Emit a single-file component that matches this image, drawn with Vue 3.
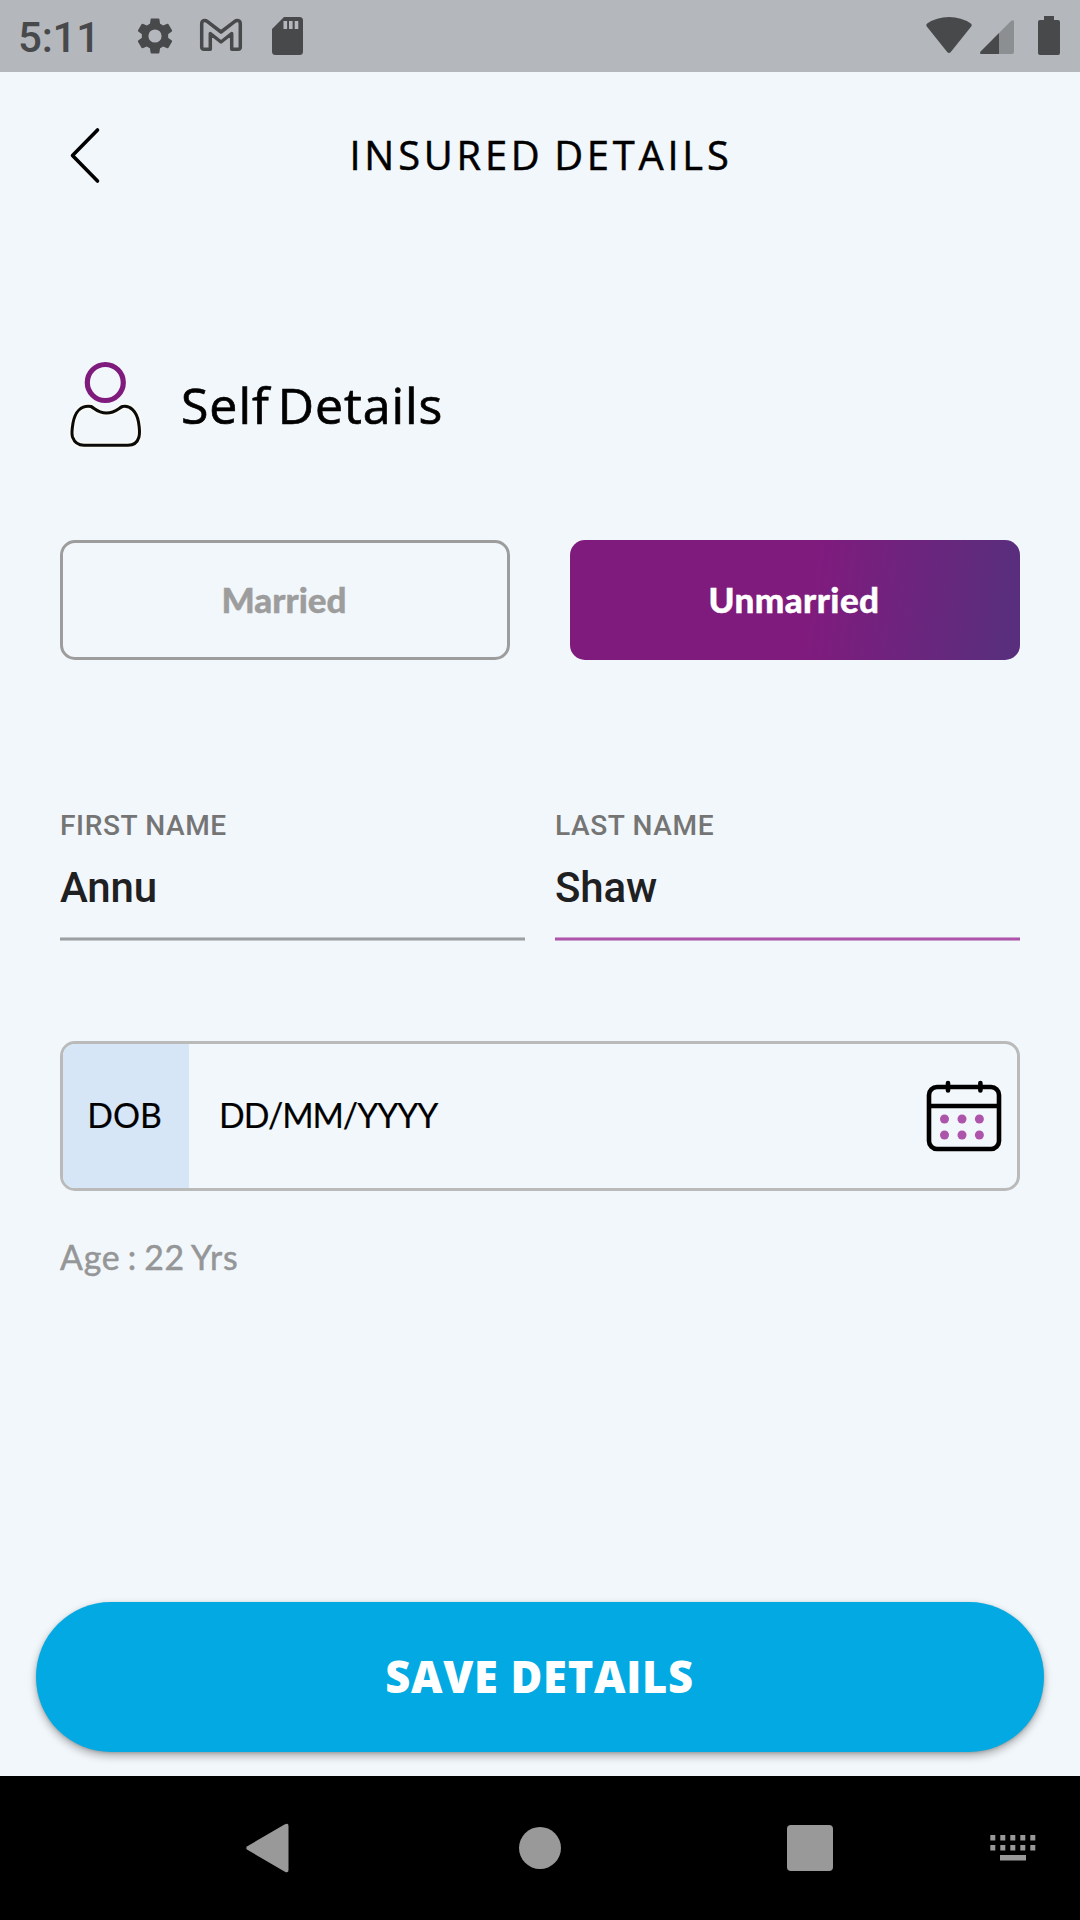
<script setup>
import { ref } from 'vue'

const status = ref('Unmarried')
const options = ['Married', 'Unmarried']
const fields = [
  { label: 'FIRST NAME', value: 'Annu', active: false },
  { label: 'LAST NAME', value: 'Shaw', active: true },
]
const keyColumns = [0, 10, 20, 30, 40]
</script>

<template>
  <div class="screen">
    <div class="statusbar">
      <span class="clock">5:11</span>
      <svg class="gear" width="44" height="44" viewBox="0 0 24 24"><path fill="#48494b" d="M19.14 12.94c.04-.3.06-.61.06-.94s-.02-.64-.07-.94l2.03-1.58a.49.49 0 0 0 .12-.61l-1.92-3.32a.49.49 0 0 0-.59-.22l-2.39.96a7 7 0 0 0-1.62-.94l-.36-2.54A.48.48 0 0 0 13.920 2.400h-3.840a.47.47 0 0 0-.47.41l-.36 2.540c-.59.24-1.130.57-1.620.94l-2.390-.96a.48.48 0 0 0-.59.22L2.740 8.870a.47.47 0 0 0 .12.61l2.030 1.580c-.05.3-.09.63-.09.94s.02.64.07.94l-2.030 1.580a.49.49 0 0 0-.12.61l1.920 3.320c.12.22.37.29.59.22l2.390-.96c.5.38 1.030.7 1.620.94l.36 2.540c.05.24.24.41.48.41h3.840c.24 0 .44-.17.47-.41l.36-2.540a7 7 0 0 0 1.620-.94l2.390.96c.22.08.47 0 .59-.22l1.920-3.320a.47.47 0 0 0-.12-.61zM12 15.600A3.600 3.600 0 1 1 12 8.400a3.600 3.600 0 0 1 0 7.200z" /></svg>
      <svg class="mail" width="42" height="32" viewBox="0 0 42 32"><path d="M1.700 5C1.700 1.500 4.800.500 7.500 2.600L21 13 34.500 2.600C37.200.500 40.300 1.500 40.300 5V28Q40.300 30.300 38 30.300H31.700V14.500L21 23 10.300 14.500V30.300H4Q1.700 30.300 1.700 28Z" fill="none" stroke="#48494b" stroke-width="3.500" stroke-linejoin="round" /></svg>
      <svg class="card" width="31" height="38" viewBox="0 0 31 38"><path d="M12 0H27.500Q31 0 31 3.500V34.500Q31 38 27.500 38H3.500Q0 38 0 34.500V12Z" fill="#48494b" /><path d="M11.500 4h3.600v8h-3.600zM17 4h3.600v8H17zM22.700 4h3.600v8h-3.600z" fill="#b4b7bc" /></svg>
      <span class="grow"></span>
      <svg class="wifi" width="46" height="37" viewBox="0 0 46 37"><path d="M.6 9.200Q-.4 7.600 1.200 6.500Q10.500 0 23 0T44.800 6.500Q46.400 7.600 45.400 9.200L24.800 35Q23 37 21.200 35Z" fill="#48494b" /></svg>
      <svg class="signal" width="34" height="34" viewBox="0 0 34 34"><path d="M19 13 31 .9Q34-.8 34 2V32Q34 34 32 34H19Z" fill="#8b8f92" /><path d="M19 13V34H2Q-1 34 .6 31.400Z" fill="#48494b" /></svg>
      <svg class="battery" width="22" height="39" viewBox="0 0 22 39"><path d="M6 0H16V4H20Q22 4 22 6V37Q22 39 20 39H2Q0 39 0 37V6Q0 4 2 4H6Z" fill="#48494b" /></svg>
    </div>

    <header class="header">
      <svg class="chevron" width="32" height="58" viewBox="0 0 32 58"><path d="M28.500 4 3.500 29.500 28.500 55" fill="none" stroke="#000" stroke-width="3.600" stroke-linecap="round" stroke-linejoin="round" /></svg>
      <h1>INSURED DETAILS</h1>
    </header>

    <main class="content">
      <section class="person">
        <svg width="76" height="90" viewBox="0 0 76 90">
          <circle cx="37.300" cy="22.500" r="18" fill="none" stroke="#801b7e" stroke-width="5.200" />
          <path d="M23 46.500C13 45 7 52 5 63C4 69 3.500 74 4.500 77Q7.500 85.300 16 85.300H60Q68.500 85.300 71 77C72 73 71.500 68 70.500 62C68.500 51 62 45 54.500 46.500C50.500 48 47.500 53 38.500 53S26.500 48 23 46.500Z" fill="none" stroke="#fbfaf5" stroke-width="6" stroke-linejoin="round" />
          <path d="M23 46.500C13 45 7 52 5 63C4 69 3.500 74 4.500 77Q7.500 85.300 16 85.300H60Q68.500 85.300 71 77C72 73 71.500 68 70.500 62C68.500 51 62 45 54.500 46.500C50.500 48 47.500 53 38.500 53S26.500 48 23 46.500Z" fill="none" stroke="#0a0a08" stroke-width="3" stroke-linejoin="round" />
        </svg>
        <h2>Self Details</h2>
      </section>

      <div class="choices">
        <button v-for="o in options" :key="o" class="choice" :class="[o.toLowerCase(), { selected: o === status }]" @click="status = o">{{ o }}</button>
      </div>

      <div class="fields">
        <div v-for="f in fields" :key="f.label" class="field" :class="{ active: f.active }">
          <span class="label">{{ f.label }}</span>
          <span class="value">{{ f.value }}</span>
        </div>
      </div>

      <div class="dob">
        <div class="dob-tag">DOB</div>
        <span class="dob-value">DD/MM/YYYY</span>
        <svg width="76" height="72" viewBox="0 0 76 72">
          <rect x="3" y="7" width="70" height="62" rx="8" fill="none" stroke="#000" stroke-width="4.600" />
          <path d="M3 26H73" stroke="#000" stroke-width="4.600" />
          <path d="M22 3V10.500M54.400 3V10.500" stroke="#000" stroke-width="4.600" stroke-linecap="round" />
          <g fill="#ad54ab">
            <circle cx="18.500" cy="39" r="4.500" /><circle cx="36" cy="39" r="4.500" /><circle cx="53.400" cy="39" r="4.500" />
            <circle cx="18.500" cy="55" r="4.500" /><circle cx="36" cy="55" r="4.500" /><circle cx="53.400" cy="55" r="4.500" />
          </g>
        </svg>
      </div>
      <p class="age">Age : 22 Yrs</p>
    </main>

    <button class="save">SAVE DETAILS</button>

    <nav class="navbar">
      <svg class="back" width="43" height="50" viewBox="0 0 43 50"><path d="M1.300 26.800Q-.8 25 1.300 23.200L38.500 1.600Q42.500-.6 42.500 3V47Q42.500 50.600 38.500 48.400Z" fill="#999" /></svg>
      <span class="home"></span>
      <span class="recent"></span>
      <svg class="keyboard" width="46" height="28" viewBox="0 0 46 28">
        <g fill="#999">
          <template v-for="x in keyColumns" :key="x">
            <rect :x="x + 0.3" y="1" width="5" height="5.500" /><rect :x="x + 0.3" y="11" width="5" height="5.500" />
          </template>
          <rect x="10" y="21" width="26" height="5.500" />
        </g>
      </svg>
    </nav>
  </div>
</template>

<style>
body { margin: 0; background: #f2f7fb; }
</style>

<style scoped>
.screen {
  box-sizing: border-box;
  width: 1080px;
  height: 1920px;
  display: flex;
  flex-direction: column;
  overflow: hidden;
  background: #f2f7fb;
  color: #000;
  font-family: "Lato", sans-serif;
}
svg { display: block; flex: none; overflow: visible; }
button { border: 0; padding: 0; font-family: inherit; }

.statusbar {
  height: 72px;
  flex: none;
  box-sizing: border-box;
  display: flex;
  align-items: flex-start;
  padding: 0 20px 0 18px;
  background: #b4b7bc;
}
.clock {
  width: 115px;
  margin-top: 2px;
  font: 500 42px/72px "Roboto", sans-serif;
  letter-spacing: -0.2px;
  color: #48494b;
}
.gear { margin-top: 14px; }
.mail { margin: 19px 0 0 23px; }
.card { margin: 17px 0 0 30px; }
.grow { flex: 1; }
.wifi { margin: 17px 8px 0 0; }
.signal { margin: 20px 24px 0 0; }
.battery { margin-top: 16px; }

.header {
  height: 168px;
  flex: none;
  display: flex;
  align-items: center;
  padding: 0 69px;
}
.chevron { margin-bottom: 2px; }
.header h1 {
  flex: 1;
  margin: 0 32px 2px 2px;
  font: 400 39.800px/50px "Open Sans", sans-serif;
  letter-spacing: 3.800px;
  word-spacing: -3.500px;
  text-align: center;
  white-space: nowrap;
  -webkit-text-stroke: 0.5px #000;
}

.content { flex: 1; padding: 0 60px; }
.person {
  display: flex;
  align-items: center;
  gap: 37px;
  height: 90px;
  margin-top: 120px;
  padding-left: 8px;
}
.person h2 {
  margin: 0 0 1px;
  font: 400 50px/60px "Open Sans", sans-serif;
  letter-spacing: 0.95px;
  word-spacing: -6px;
  -webkit-text-stroke: 0.7px #000;
}
.choices { display: flex; gap: 60px; margin-top: 90px; }
.choice {
  flex: none;
  width: 450px;
  height: 120px;
  box-sizing: border-box;
  padding: 0 2px 3px 0;
  border: 3px solid #9d9d9d;
  border-radius: 15px;
  background: transparent;
  color: #9d9d9d;
  font-size: 35px;
  font-weight: 900;
  -webkit-text-stroke: 0.4px currentColor;
}
.choice.unmarried { letter-spacing: 0.45px; }
.choice.selected {
  border: 0;
  background: linear-gradient(97deg, #801b7e 0%, #801b7e 53%, #592e7d 97%);
  color: #fff;
}

.fields { display: flex; gap: 30px; margin-top: 145px; }
.field {
  flex: 1;
  height: 136px;
  box-sizing: border-box;
  display: flex;
  flex-direction: column;
  font-family: "Roboto", sans-serif;
  --line: #9d9fa1;
  --edge: #c5c8cb;
}
.field::after {
  content: "";
  height: 2px;
  margin-top: auto;
  border: solid var(--edge);
  border-width: 1px 0;
  background: var(--line);
}
.field.active { --line: #ad54ab; --edge: #cda0d0; }
.label { line-height: 41px; font-size: 28.1px; font-weight: 500; letter-spacing: 0.6px; color: #757575; }
.value { margin-top: 12px; line-height: 60px; font-size: 42px; font-weight: 500; letter-spacing: -0.15px; color: #1f2022; }

.dob {
  display: flex;
  align-items: center;
  box-sizing: border-box;
  height: 150px;
  margin-top: 100px;
  padding-right: 15px;
  border: 3px solid #bababa;
  border-radius: 15px;
  overflow: hidden;
  font-size: 33.800px;
}
.dob svg { margin-bottom: 1px; }
.dob-tag {
  width: 126px;
  box-sizing: border-box;
  padding: 0 3px 2px 0;
  align-self: stretch;
  display: flex;
  align-items: center;
  justify-content: center;
  background: #d6e6f6;
}
.dob-value { flex: 1; padding: 0 0 2px 30px; letter-spacing: -1.05px; }
.dob-tag, .dob-value { -webkit-text-stroke: 0.2px #000; }
.age {
  margin: 46px 0 0;
  font-size: 33.800px;
  line-height: 40px;
  letter-spacing: 0.8px;
  word-spacing: -2.200px;
  color: #959697;
  -webkit-text-stroke: 0.5px #959697;
}

.save {
  flex: none;
  height: 150px;
  margin: 0 36px 24px;
  padding: 0 1px 1px 0;
  border-radius: 75px;
  background: #02a9e2;
  color: #fff;
  font: 800 43.400px "Open Sans", sans-serif;
  letter-spacing: 0.7px;
  box-shadow: 0 4px 8px rgba(0, 0, 0, 0.3), 0 1px 3px rgba(0, 0, 0, 0.15);
}

.navbar {
  height: 144px;
  flex: none;
  box-sizing: border-box;
  display: flex;
  align-items: center;
  padding: 0 44px 0 246px;
  background: #000;
}
.home { width: 42px; height: 42px; margin-left: 230px; border-radius: 50%; background: #999; }
.recent { width: 46px; height: 46px; margin-left: 226px; border-radius: 4px; background: #999; }
.keyboard { margin-left: auto; }
</style>
